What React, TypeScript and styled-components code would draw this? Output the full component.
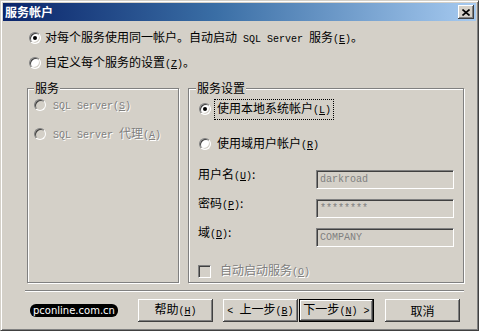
import React from "react";
import styled, { createGlobalStyle } from "styled-components";

const Global = createGlobalStyle`
  html, body { margin: 0; padding: 0; background: #d4d0c8; }
  body { font-family: "Noto Sans CJK SC", "Noto Sans", sans-serif; font-size: 12px; color: #000; }
`;

const Window = styled.div`
  width: 479px;
  height: 331px;
  box-sizing: border-box;
  background: #d4d0c8;
  border: 1px solid;
  border-color: #d4d0c8 #404040 #404040 #d4d0c8;
  box-shadow: inset 1px 1px 0 #ffffff, inset -1px -1px 0 #808080;
  padding: 2px;
  display: flex;
  flex-direction: column;
`;

const TitleBar = styled.div`
  height: 18px;
  flex: none;
  display: flex;
  align-items: center;
  justify-content: space-between;
  padding: 0 2px 0 2px;
  background: linear-gradient(90deg, #0a246a 0%, #3a6ea5 45%, #a6caf0 100%);
`;

const Title = styled.span`
  color: #fff;
  font-weight: bold;
  font-size: 12px;
  line-height: 14px;
`;

const CloseBtn = styled.span`
  width: 16px;
  height: 14px;
  box-sizing: border-box;
  display: flex;
  align-items: center;
  justify-content: center;
  background: #d4d0c8;
  box-shadow: inset -1px -1px 0 #404040, inset 1px 1px 0 #ffffff,
    inset -2px -2px 0 #808080;
`;

const Body = styled.div`
  flex: 1;
  display: flex;
  flex-direction: column;
  padding: 9px 12px 0 24px;
`;

const Options = styled.div`
  display: flex;
  flex-direction: column;
  gap: 9px;
  padding-left: 2px;
`;

const Row = styled.div<{ $gap?: number; $h?: number; $mt?: number }>`
  display: flex;
  align-items: center;
  height: ${(p) => p.$h ?? 16}px;
  gap: ${(p) => p.$gap ?? 3}px;
  margin-top: ${(p) => p.$mt ?? 0}px;
`;

const Radio = styled.span<{ $checked?: boolean; $disabled?: boolean }>`
  position: relative;
  flex: none;
  width: 12px;
  height: 12px;
  box-sizing: border-box;
  border-radius: 50%;
  border: 1px solid;
  border-color: #808080 #ffffff #ffffff #808080;
  background: ${(p) => (p.$disabled ? "#d4d0c8" : "#ffffff")};
  box-shadow: inset 1px 1px 0 #404040, inset -1px -1px 0 #d4d0c8;
  &::after {
    content: "";
    display: ${(p) => (p.$checked ? "block" : "none")};
    position: absolute;
    left: 3px;
    top: 3px;
    width: 4px;
    height: 4px;
    border-radius: 50%;
    background: #000;
  }
`;

const Check = styled.span`
  flex: none;
  width: 13px;
  height: 13px;
  box-sizing: border-box;
  border: 1px solid;
  border-color: #808080 #ffffff #ffffff #808080;
  background: #d4d0c8;
  box-shadow: inset 1px 1px 0 #404040, inset -1px -1px 0 #d4d0c8;
`;

const Label = styled.span<{ $disabled?: boolean; $focus?: boolean }>`
  white-space: pre;
  line-height: 14px;
  color: ${(p) => (p.$disabled ? "#808080" : "#000")};
  text-shadow: ${(p) => (p.$disabled ? "1px 1px 0 #ffffff" : "none")};
  border: 1px dotted ${(p) => (p.$focus ? "#000" : "transparent")};
  padding: 1px 2px;
  margin-left: -3px;
`;

const Lat = styled.span`
  font-family: "Liberation Mono", monospace;
  font-size: 10px;
  white-space: pre;
`;

const Groups = styled.div`
  display: flex;
  gap: 9px;
  margin-top: 17px;
`;

const Group = styled.div<{ $w?: number }>`
  ${(p) => (p.$w ? `width: ${p.$w}px; flex: none;` : "flex: 1;")}
  height: 195px;
  box-sizing: border-box;
  border: 1px solid #808080;
  box-shadow: inset 1px 1px 0 #ffffff, 1px 1px 0 #ffffff;
  display: flex;
  flex-direction: column;
`;

const Legend = styled.span<{ $ml: number }>`
  align-self: flex-start;
  margin: -7px 0 0 ${(p) => p.$ml}px;
  padding: 0 1px;
  line-height: 12px;
  background: #d4d0c8;
`;

const GroupBody = styled.div<{ $pl: number; $pt: number }>`
  display: flex;
  flex-direction: column;
  padding: ${(p) => p.$pt}px 0 0 ${(p) => p.$pl}px;
`;

const Field = styled.div<{ $mt: number }>`
  display: flex;
  align-items: flex-start;
  height: 21px;
  margin-top: ${(p) => p.$mt}px;
`;

const FieldLabel = styled.span`
  width: 118px;
  flex: none;
  line-height: 12px;
`;

const Input = styled.div`
  margin-top: 2px;
  width: 138px;
  height: 19px;
  box-sizing: border-box;
  border: 1px solid;
  border-color: #808080 #ffffff #ffffff #808080;
  box-shadow: inset 1px 1px 0 #404040, inset -1px -1px 0 #d4d0c8;
  background: #d4d0c8;
  color: #808080;
  font-family: "Liberation Mono", monospace;
  font-size: 10px;
  line-height: 17px;
  padding: 0 3px;
  white-space: nowrap;
`;

const Separator = styled.div`
  height: 1px;
  margin: 7px 0 0 -2px;
  background: #808080;
  border-bottom: 1px solid #ffffff;
`;

const Footer = styled.div`
  display: flex;
  align-items: center;
  margin-top: 7px;
  height: 23px;
`;

const Logo = styled.span`
  margin-left: 3px;
  height: 13px;
  line-height: 13px;
  padding: 0 3px;
  border-radius: 6px;
  background: #000;
  color: #fff;
  font-family: "DejaVu Sans", sans-serif;
  font-size: 10px;
`;

const Button = styled.button<{ $default?: boolean; $ml: number }>`
  margin-left: ${(p) => p.$ml}px;
  width: 75px;
  height: 23px;
  box-sizing: border-box;
  padding: 0;
  background: #d4d0c8;
  color: #000;
  font-family: "Noto Sans CJK SC", sans-serif;
  font-size: 12px;
  line-height: 14px;
  border: ${(p) => (p.$default ? "1px solid #000" : "none")};
  box-shadow: inset -1px -1px 0 #404040, inset 1px 1px 0 #ffffff,
    inset -2px -2px 0 #808080;
  white-space: pre;
`;

const Mn = ({ k }: { k: string }) => (
  <Lat>
    (<u>{k}</u>)
  </Lat>
);

export default function App() {
  return (
    <>
      <Global />
      <Window>
        <TitleBar>
          <Title>服务帐户</Title>
          <CloseBtn>
            <svg width="8" height="7" viewBox="0 0 8 7">
              <path d="M0.5 0.5 L7.5 6.5 M7.5 0.5 L0.5 6.5" stroke="#000" strokeWidth="1.6" />
            </svg>
          </CloseBtn>
        </TitleBar>
        <Body>
          <Options>
            <Row $gap={4}>
              <Radio $checked />
              <Label>
                对每个服务使用同一帐户。自动启动<Lat>{" SQL Server "}</Lat>服务<Mn k="E" />。
              </Label>
            </Row>
            <Row $gap={4}>
              <Radio />
              <Label>
                自定义每个服务的设置<Mn k="Z" />。
              </Label>
            </Row>
          </Options>
          <Groups>
            <Group $w={152}>
              <Legend $ml={6}>服务</Legend>
              <GroupBody $pl={6} $pt={3}>
                <Row $gap={7}>
                  <Radio $disabled />
                  <Label $disabled>
                    <Lat>SQL Server</Lat>
                    <Mn k="S" />
                  </Label>
                </Row>
                <Row $gap={7} $mt={13}>
                  <Radio $disabled />
                  <Label $disabled>
                    <Lat>{"SQL Server "}</Lat>代理<Mn k="A" />
                  </Label>
                </Row>
              </GroupBody>
            </Group>
            <Group>
              <Legend $ml={7}>服务设置</Legend>
              <GroupBody $pl={10} $pt={6}>
                <Row $gap={6} $h={18}>
                  <Radio $checked />
                  <Label $focus>
                    使用本地系统帐户<Mn k="L" />
                  </Label>
                </Row>
                <Row $gap={6} $h={18} $mt={17}>
                  <Radio />
                  <Label>
                    使用域用户帐户<Mn k="R" />
                  </Label>
                </Row>
              </GroupBody>
              <GroupBody $pl={9} $pt={0}>
                <Field $mt={15}>
                  <FieldLabel>
                    用户名<Mn k="U" />:
                  </FieldLabel>
                  <Input>darkroad</Input>
                </Field>
                <Field $mt={8}>
                  <FieldLabel>
                    密码<Mn k="P" />:
                  </FieldLabel>
                  <Input>********</Input>
                </Field>
                <Field $mt={8}>
                  <FieldLabel>
                    域<Mn k="D" />:
                  </FieldLabel>
                  <Input>COMPANY</Input>
                </Field>
                <Row $gap={9} $h={14} $mt={17}>
                  <Check />
                  <Label $disabled>
                    自动启动服务<Mn k="O" />
                  </Label>
                </Row>
              </GroupBody>
            </Group>
          </Groups>
          <Separator />
          <Footer>
            <Logo>pconline.com.cn</Logo>
            <Button $ml={20}>
              帮助<Mn k="H" />
            </Button>
            <Button $ml={10}>
              <Lat>{"< "}</Lat>上一步<Mn k="B" />
            </Button>
            <Button $ml={1} $default>
              下一步<Mn k="N" />
              <Lat>{" >"}</Lat>
            </Button>
            <Button $ml={11}>取消</Button>
          </Footer>
        </Body>
      </Window>
    </>
  );
}
